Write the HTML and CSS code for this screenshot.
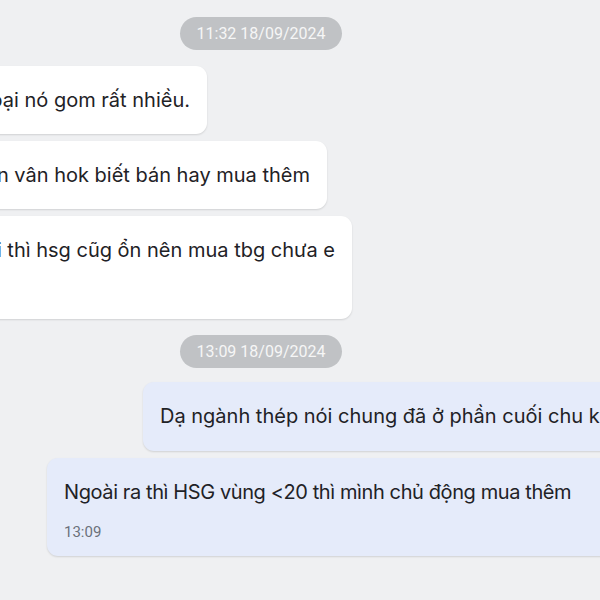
FILE: index.html
```html
<!DOCTYPE html>
<html lang="vi">
<head>
<meta charset="utf-8">
<link rel="stylesheet" href="styles.css">
</head>
<body>
<div class="chat">
  <div class="stamp-row"><span class="stamp">11:32 18/09/2024</span></div>
  <div class="in-row r1"><div class="bubble in">Loại nó gom rất nhiều.</div></div>
  <div class="in-row r2"><div class="bubble in">Mà em còn vân hok biết bán hay mua thêm</div></div>
  <div class="in-row r3"><div class="bubble in tall">Hiện tại thì hsg cũg ổn nên mua tbg chưa e</div></div>
  <div class="stamp-row second"><span class="stamp">13:09 18/09/2024</span></div>
  <div class="out-row o1"><div class="bubble out">Dạ ngành thép nói chung đã ở phần cuối chu kỳ tăng trưởng rồi ạ</div></div>
  <div class="out-row o2"><div class="bubble out wide"><div class="tight">Ngoài ra thì HSG vùng &lt;20 thì mình chủ động mua thêm</div><div class="time">13:09</div></div></div>
</div>
</body>
</html>
```
FILE: styles.css
```css
html, body {
  margin: 0;
  padding: 0;
  width: 600px;
  height: 600px;
  overflow: hidden;
  background: #eff0f2;
  font-family: Inter, "Noto Sans", sans-serif;
}
.chat {
  display: flex;
  flex-direction: column;
  padding-top: 17px;
}
.stamp-row {
  display: flex;
  padding-left: 180px;
}
.stamp-row.second { margin-top: 16px; }
.stamp {
  background: #c0c2c5;
  color: #f6f6f6;
  font-family: Roboto, sans-serif;
  font-size: 16px;
  height: 33px;
  line-height: 33px;
  padding: 0 14px;
  border-radius: 17px;
  width: 134px;
  text-align: center;
}
.bubble {
  flex-shrink: 0;
  white-space: nowrap;
  font-size: 20px;
  line-height: 26px;
  color: #1f2226;
  padding: 21px 17px;
  border-radius: 11px;
  box-shadow: 0 1px 2px rgba(0,0,0,0.13);
}
.in { background: #ffffff; }
.out { background: #e5ebfa; }
.in-row {
  display: flex;
  justify-content: flex-end;
  margin-top: 7px;
}
.in-row.r1 { width: 207px; margin-top: 16px; }
.in-row.r2 { width: 327px; }
.in-row.r3 { width: 352px; }
.bubble.tall { padding-bottom: 56px; }
.out-row { display: flex; }
.out-row.o1 { padding-left: 143px; margin-top: 14px; }
.out-row.o2 { padding-left: 47px; margin-top: 7px; }
.o1 .bubble { height: 27px; }
.o2 .bubble { padding-top: 21px; padding-bottom: 15px; }
.bubble.wide { padding-right: 80px; }
.tight { letter-spacing: -0.4px; }
.time {
  font-family: Roboto, sans-serif;
  font-size: 15px;
  line-height: 18px;
  color: #6b717a;
  margin-top: 18px;
}
```
